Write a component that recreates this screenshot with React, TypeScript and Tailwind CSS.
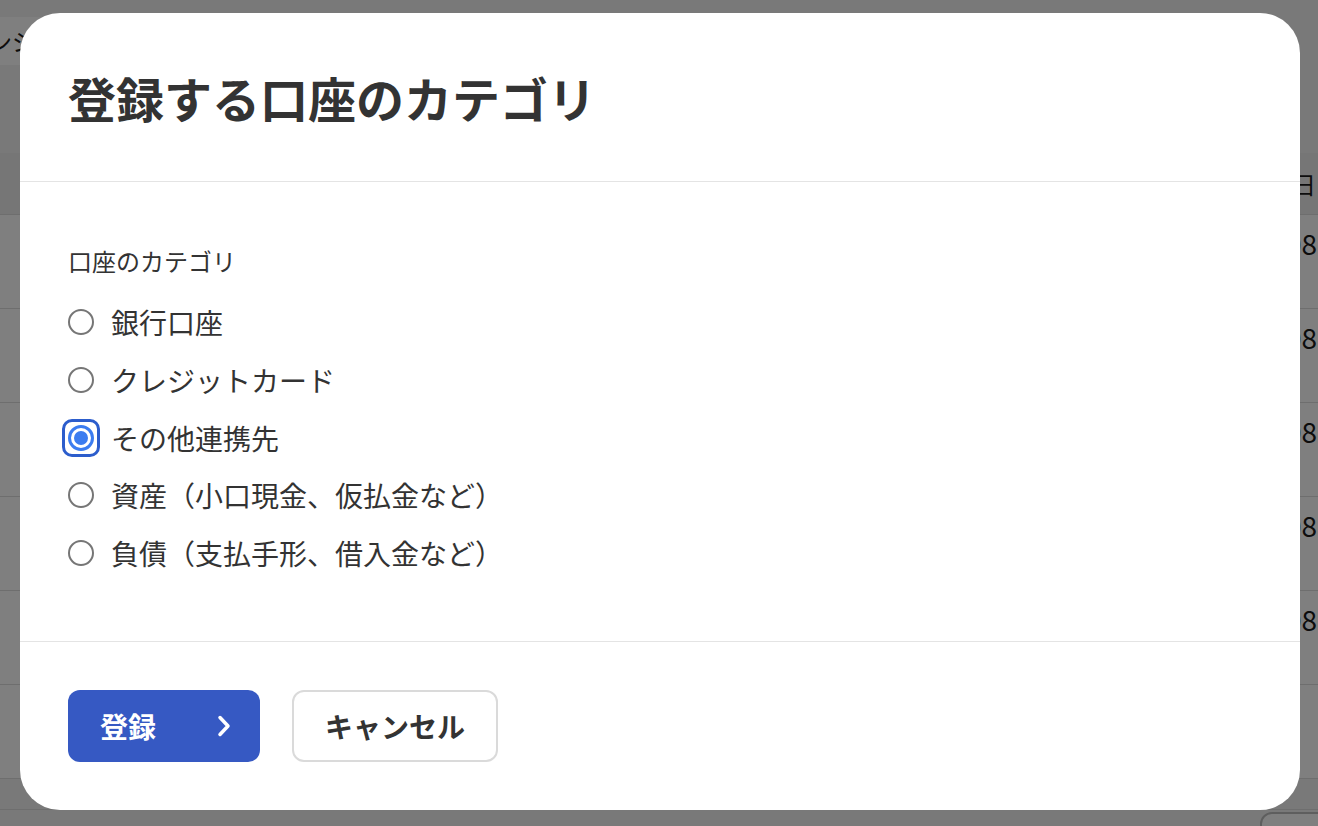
const options = [
  "銀行口座",
  "クレジットカード",
  "その他連携先",
  "資産（小口現金、仮払金など）",
  "負債（支払手形、借入金など）",
];

const dates = ["2024/12/08", "2024/11/08", "2024/10/08", "2024/09/08", "2024/08/08", ""];

function Radio({ checked }: { checked?: boolean }) {
  if (!checked) {
    return <span className="size-[26px] shrink-0 rounded-full border-2 border-[#767676] bg-white" />;
  }
  return (
    <span className="relative flex size-[26px] shrink-0 items-center justify-center rounded-full border-[3px] border-[#3b7cf0] bg-white">
      <span className="size-[14px] rounded-full bg-[#3b7cf0]" />
      <span className="absolute -inset-[9px] rounded-[10px] border-[3px] border-[#2c5dcc]" />
    </span>
  );
}

const Background = () => {
  return (
    <div className="min-h-full bg-[#f3f3f3] text-[#1a1a1a]">
      <div className="h-[17px]" />
      <div className="flex h-[48px]">
        <div className="-ml-[60px] flex w-[200px] items-center bg-white pl-[24px] text-[24px]">
          レンジ
        </div>
      </div>
      <div className="mt-[88px] bg-white">
        <div className="flex h-[62px] items-center justify-end border-b border-[#dcdcdc] bg-[#ededed] pr-[2px] text-[24px]">
          登録日
        </div>
        {dates.map((d, i) => (
          <div
            key={i}
            className="flex h-[94px] justify-end border-b border-[#dcdcdc] pr-[1px] pt-[10px] text-[28px] leading-[36px]"
          >
            {d}
          </div>
        ))}
      </div>
      <div className="mt-[30px] flex justify-end border-t border-[#dcdcdc] pt-[2px]">
        <div className="-mr-[22px] h-[48px] w-[80px] rounded-[12px] border-2 border-[#bdbdbd] bg-white" />
      </div>
    </div>
  );
};

export default function App() {
  return (
    <div className="relative h-[826px] w-full overflow-hidden font-['Noto_Sans_CJK_JP','Noto_Sans',sans-serif]">
      <Background />
      <div className="absolute inset-0 bg-black/50 pl-[20px] pt-[13px]">
        <div className="flex h-[797px] w-[1280px] flex-col rounded-[40px] bg-white text-[#333]">
          <div className="border-b border-[#e4e4e4] px-[48px] py-[48px]">
            <h1 className="text-[48px] font-bold leading-[72px]">登録する口座のカテゴリ</h1>
          </div>
          <div className="flex flex-1 flex-col border-b border-[#e4e4e4] px-[48px] pt-[61px]">
            <p className="text-[24px] leading-[36px]">口座のカテゴリ</p>
            <div className="mt-[22px] flex flex-col gap-[15.75px]">
              {options.map((o, i) => (
                <label key={o} className="flex h-[42px] items-center gap-[17px] text-[28px] leading-[42px]">
                  <Radio checked={i === 2} />
                  <span>{o}</span>
                </label>
              ))}
            </div>
          </div>
          <div className="flex gap-[32px] px-[48px] py-[48px]">
            <button className="flex h-[72px] w-[192px] items-center justify-between rounded-[12px] bg-[#3659c3] pl-[32px] pr-[29px] text-[28px] font-bold text-white">
              <span>登録</span>
              <svg width="14" height="22" viewBox="0 0 14 22" fill="none">
                <path d="M3 2.5 11 11 3 19.5" stroke="white" strokeWidth="3.5" strokeLinecap="round" strokeLinejoin="round" />
              </svg>
            </button>
            <button className="flex h-[72px] w-[206px] items-center justify-center rounded-[12px] border-2 border-[#dadada] bg-white text-[28px] font-bold text-[#333]">
              キャンセル
            </button>
          </div>
        </div>
      </div>
    </div>
  );
}
